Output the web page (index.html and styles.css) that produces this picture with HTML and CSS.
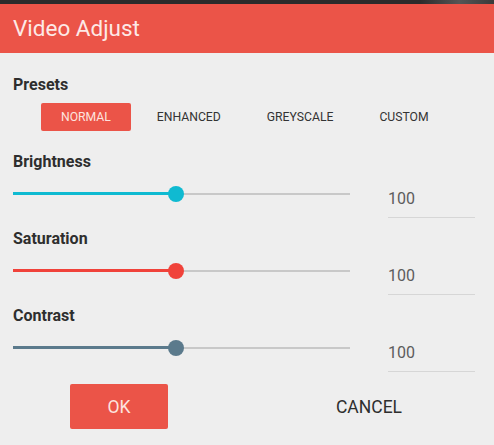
FILE: index.html
```html
<!DOCTYPE html>
<html lang="en">
<head>
<meta charset="utf-8">
<title>Video Adjust</title>
<link rel="stylesheet" href="styles.css">
</head>
<body>
<div class="topstrip"></div>
<header class="header"><h1 class="title">Video Adjust</h1></header>
<main class="content">
  <h2 class="label">Presets</h2>
  <div class="presets">
    <button class="preset active">NORMAL</button>
    <button class="preset">ENHANCED</button>
    <button class="preset">GREYSCALE</button>
    <button class="preset">CUSTOM</button>
  </div>

  <section class="setting">
    <h2 class="label">Brightness</h2>
    <div class="row">
      <div class="slider cyan"><div class="fill" style="width:163px"></div><div class="thumb" style="left:163px"></div></div>
      <div class="value">100</div>
    </div>
  </section>

  <section class="setting">
    <h2 class="label">Saturation</h2>
    <div class="row">
      <div class="slider red"><div class="fill" style="width:163px"></div><div class="thumb" style="left:163px"></div></div>
      <div class="value">100</div>
    </div>
  </section>

  <section class="setting">
    <h2 class="label">Contrast</h2>
    <div class="row">
      <div class="slider slate"><div class="fill" style="width:163px"></div><div class="thumb" style="left:163px"></div></div>
      <div class="value">100</div>
    </div>
  </section>

  <div class="actions">
    <button class="btn ok">OK</button>
    <button class="btn cancel">CANCEL</button>
  </div>
</main>
</body>
</html>
```

FILE: styles.css
```css
* { box-sizing: border-box; }
html, body { margin: 0; padding: 0; }
body {
  background: #eeeeee;
  font-family: Roboto, "Liberation Sans", Arial, sans-serif;
  color: #333;
  width: 494px;
  height: 445px;
  overflow: hidden;
}
.topstrip {
  height: 4px;
  background: linear-gradient(90deg, #2b2b2b 0%, #2b2b2b 85%, #555 93%, #3a3a3a 100%);
}
.header {
  height: 49px;
  background: #eb5448;
  padding-left: 13px;
}
.title {
  margin: 0;
  font-size: 22.5px;
  font-weight: 400;
  line-height: 49px;
  color: #fde9e6;
}
.content {
  padding: 22px 13px 0 13px;
}
.label {
  margin: 0;
  font-size: 16px;
  font-weight: 700;
  line-height: 20px;
  color: #2e2e2e;
}
.presets {
  display: flex;
  gap: 6px;
  margin: 8px 0 0 28px;
}
.preset {
  height: 28px;
  padding: 0 20px;
  border: none;
  border-radius: 2px;
  background: transparent;
  font-family: inherit;
  font-size: 12.2px;
  font-weight: 400;
  color: #333;
  cursor: pointer;
}
.preset.active {
  background: #eb5448;
  color: #fde3df;
}
.setting { margin-top: 21px; }
.setting + .setting { margin-top: 11px; }
.row {
  display: grid;
  grid-template-columns: 337px 87px;
  column-gap: 38px;
  align-items: start;
}
.slider {
  position: relative;
  height: 43px;
  display: flex;
  align-items: center;
}
.slider::before {
  content: "";
  display: block;
  width: 100%;
  height: 2px;
  background: #c8c8c8;
}
.fill {
  position: absolute;
  left: 0;
  top: 20px;
  height: 3px;
}
.thumb {
  position: absolute;
  top: 13.5px;
  width: 16px;
  height: 16px;
  margin-left: -8px;
  border-radius: 50%;
}
.cyan .fill, .cyan .thumb { background: #0fbad1; }
.red .fill, .red .thumb { background: #f0423a; }
.slate .fill, .slate .thumb { background: #5b7a8c; }
.value {
  padding: 16.5px 0 8.5px 0;
  font-size: 16px;
  line-height: 20px;
  color: #5c5c5c;
  border-bottom: 1px solid #d6d6d6;
}
.actions {
  display: flex;
  gap: 152px;
  margin: 12px 0 0 57px;
}
.btn {
  width: 98px;
  height: 45px;
  border: none;
  border-radius: 2px;
  background: transparent;
  font-family: inherit;
  font-size: 17.5px;
  color: #2e2e2e;
  cursor: pointer;
}
.btn.ok {
  background: #eb5448;
  color: #fde3df;
}
```
